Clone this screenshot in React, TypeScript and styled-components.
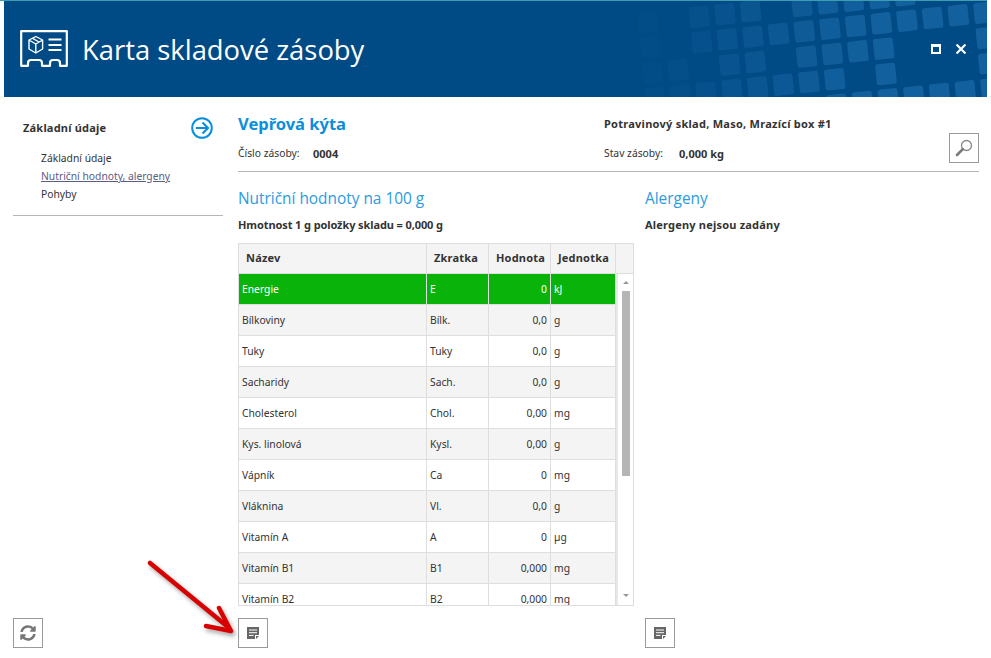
import React from 'react';
import styled, { createGlobalStyle } from 'styled-components';
import { FaSyncAlt } from 'react-icons/fa';

const GlobalStyle = createGlobalStyle`
  html, body {
    margin: 0;
    padding: 0;
    background: #fff;
  }
  body {
    font-family: "Noto Sans", "Liberation Sans", sans-serif;
    font-size: 10.3px;
    color: #333;
  }
  * {
    box-sizing: border-box;
  }
`;

const rows = [
  { name: 'Energie', short: 'E', value: '0', unit: 'kJ' },
  { name: 'Bílkoviny', short: 'Bílk.', value: '0,0', unit: 'g' },
  { name: 'Tuky', short: 'Tuky', value: '0,0', unit: 'g' },
  { name: 'Sacharidy', short: 'Sach.', value: '0,0', unit: 'g' },
  { name: 'Cholesterol', short: 'Chol.', value: '0,00', unit: 'mg' },
  { name: 'Kys. linolová', short: 'Kysl.', value: '0,00', unit: 'g' },
  { name: 'Vápník', short: 'Ca', value: '0', unit: 'mg' },
  { name: 'Vláknina', short: 'Vl.', value: '0,0', unit: 'g' },
  { name: 'Vitamín A', short: 'A', value: '0', unit: 'µg' },
  { name: 'Vitamín B1', short: 'B1', value: '0,000', unit: 'mg' },
  { name: 'Vitamín B2', short: 'B2', value: '0,000', unit: 'mg' },
];

// lattice of the header background squares: [column, row]
const tiles: [number, number][] = [
  [-2, 0], [0, 0], [1, 0], [2, 0], [4, 0], [5, 0], [6, 0], [7, 0], [8, 0],
  [-3, 1], [-2, 1], [0, 1], [1, 1], [2, 1], [3, 1], [4, 1], [5, 1], [6, 1], [7, 1], [8, 1], [9, 1], [10, 1], [11, 1],
  [-3, 2], [-2, 2], [-1, 2], [1, 2], [2, 2], [4, 2], [5, 2], [6, 2], [7, 2], [11, 2],
  [-2, 3], [-1, 3], [0, 3], [1, 3], [2, 3], [3, 3], [4, 3], [5, 3], [7, 3], [11, 3],
  [5, 4], [6, 4], [7, 4], [8, 4], [9, 4], [10, 4], [11, 4],
];

const HeaderTiles = () => (
  <TileLayer width="983" height="96" viewBox="4 1 983 96">
    {tiles.map(([i, j]) => {
      const x = 590 + (328 + 77 * i + 7 * j) / 3;
      const y = (50 - 8 * i + 76 * j) / 3;
      const opacity = Math.max(0.03, Math.min(1, (x - 620) / 240));
      return (
        <rect
          key={`${i}-${j}`}
          x={x - 10}
          y={y - 10.5}
          width={20}
          height={21}
          rx={2.5}
          fill="#2a7fbf"
          fillOpacity={opacity * 0.42}
          transform={`rotate(-6 ${x} ${y})`}
        />
      );
    })}
  </TileLayer>
);

const CardIcon = () => (
  <svg width="48" height="37" viewBox="0 0 48 37" fill="none" stroke="#fff" strokeWidth="2.2" strokeLinejoin="round">
    <path d="M1.2 1.2H46.8V35.8H40V33Q40 30 37 30H33Q30 30 30 33V35.8H22V33Q22 30 19 30H11Q8 30 8 33V35.8H1.2Z" />
    <path d="M15.8 6.5L22.6 10V19L15.8 23L9 19V10ZM9 10L15.8 14L22.6 10M15.8 14V23M12.2 8.2L19 12" strokeWidth="1.4" />
    <path d="M28.5 9.5H41.5M28.5 15H41.5M28.5 20H41.5" strokeWidth="1.8" />
  </svg>
);

const ArrowCircle = () => (
  <svg width="22" height="22" viewBox="0 0 22 22" fill="none" stroke="#0a8fdc" strokeWidth="2">
    <circle cx="11" cy="11" r="9.8" />
    <path d="M4.8 11H16.5M11.5 5.5L17 11L11.5 16.5" strokeWidth="2.2" />
  </svg>
);

const SearchIcon = () => (
  <svg width="18" height="18" viewBox="0 0 18 18" fill="none">
    <circle cx="11.5" cy="6.5" r="5" stroke="#8a8a8a" strokeWidth="1.3" />
    <path d="M7.8 10.2L2 16" stroke="#7a7a7a" strokeWidth="2.6" strokeLinecap="round" />
  </svg>
);

const NoteIcon = () => (
  <svg width="12" height="12" viewBox="0 0 12 12">
    <path d="M0 0H12V8H8V12H0Z" fill="#666" />
    <path d="M9 9H12L9 12Z" fill="#666" />
    <path d="M2 3H10M2 5.7H10M2 8.4H6.5" stroke="#fff" strokeWidth="1" />
  </svg>
);

const RedArrow = () => (
  <ArrowLayer width="100" height="90" viewBox="0 0 100 90" fill="none" stroke="#d80000" strokeWidth="4.5" strokeLinecap="round" strokeLinejoin="round">
    <path d="M10 12L88 76" />
    <path d="M79 57L91 80L66 75" />
  </ArrowLayer>
);

const App = () => {
  return (
    <Page>
      <GlobalStyle />
      <TopLine />
      <Header>
        <HeaderTiles />
        <CardIcon />
        <HeaderTitle>Karta skladové zásoby</HeaderTitle>
        <WindowButtons>
          <MaximizeIcon />
          <svg width="10" height="10" viewBox="0 0 10 10" stroke="#fff" strokeWidth="2.2">
            <path d="M0.5 0.5L9.5 9.5M9.5 0.5L0.5 9.5" />
          </svg>
        </WindowButtons>
      </Header>
      <Body>
        <Sidebar>
          <SideHead>
            <SideTitle>Základní údaje</SideTitle>
            <ArrowCircle />
          </SideHead>
          <SideList>
            <SideItem>Základní údaje</SideItem>
            <SideItem $active>Nutriční hodnoty, alergeny</SideItem>
            <SideItem>Pohyby</SideItem>
          </SideList>
          <SideDivider />
          <IconButton $pushed>
            <FaSyncAlt size={16} color="#777" />
          </IconButton>
        </Sidebar>
        <Main>
          <InfoHead>
            <InfoGrid>
              <ItemTitle>Vepřová kýta</ItemTitle>
              <LocationText>Potravinový sklad, Maso, Mrazící box #1</LocationText>
              <InfoPair>
                <InfoLabel>Číslo zásoby:</InfoLabel>
                <StrongText>0004</StrongText>
              </InfoPair>
              <InfoPair>
                <InfoLabel>Stav zásoby:</InfoLabel>
                <StrongText>0,000 kg</StrongText>
              </InfoPair>
            </InfoGrid>
            <SearchButton>
              <SearchIcon />
            </SearchButton>
          </InfoHead>
          <Columns>
            <NutritionColumn>
              <SectionTitle>Nutriční hodnoty na 100 g</SectionTitle>
              <SectionNote $tight>Hmotnost 1 g položky skladu = 0,000 g</SectionNote>
              <Table>
                <TableHead>
                  <HeadCell>Název</HeadCell>
                  <HeadCell>Zkratka</HeadCell>
                  <HeadCell>Hodnota</HeadCell>
                  <HeadCell>Jednotka</HeadCell>
                  <HeadCell />
                </TableHead>
                <TableBody>
                  <Rows>
                    {rows.map((row, index) => (
                      <Row key={row.name} $selected={index === 0} $odd={index % 2 === 1}>
                        <Cell>{row.name}</Cell>
                        <Cell>{row.short}</Cell>
                        <ValueCell>{row.value}</ValueCell>
                        <Cell>{row.unit}</Cell>
                      </Row>
                    ))}
                  </Rows>
                  <Scrollbar>
                    <ScrollUp />
                    <ScrollThumb />
                    <ScrollDown />
                  </Scrollbar>
                </TableBody>
              </Table>
              <IconButton>
                <NoteIcon />
              </IconButton>
            </NutritionColumn>
            <AllergenColumn>
              <SectionTitle>Alergeny</SectionTitle>
              <SectionNote>Alergeny nejsou zadány</SectionNote>
              <IconButton $pushed>
                <NoteIcon />
              </IconButton>
            </AllergenColumn>
          </Columns>
        </Main>
      </Body>
      <RedArrow />
    </Page>
  );
};

const Page = styled.div`
  position: relative;
  width: 991px;
  height: 658px;
  overflow: hidden;
  padding-right: 4px;
`;

const TopLine = styled.div`
  height: 1px;
  background-color: #3d9db3;
`;

const Header = styled.header`
  position: relative;
  height: 96px;
  margin-left: 4px;
  padding: 29px 0 0 16px;
  display: flex;
  align-items: flex-start;
  background-color: #004a85;
  color: #fff;
  overflow: hidden;

  > svg:not(:first-child) {
    position: relative;
  }
`;

const TileLayer = styled.svg`
  position: absolute;
  left: 0;
  top: 0;
`;

const HeaderTitle = styled.h1`
  position: relative;
  margin: -1px 0 0 14px;
  font-family: "Open Sans", sans-serif;
  font-size: 27.4px;
  line-height: 42px;
  font-weight: 400;
`;

const WindowButtons = styled.div`
  position: relative;
  margin: 14px 21px 0 auto;
  display: flex;
  align-items: center;
  gap: 15px;
`;

const MaximizeIcon = styled.span`
  display: block;
  width: 10px;
  height: 10px;
  border: 2px solid #fff;
  border-top-width: 3px;
`;

const Body = styled.div`
  height: 561px;
  margin-left: 4px;
  padding: 0 8px 10px 9px;
  display: flex;
`;

const Sidebar = styled.aside`
  width: 210px;
  flex-shrink: 0;
  display: flex;
  flex-direction: column;
  padding-top: 20px;
`;

const SideHead = styled.div`
  display: flex;
  align-items: center;
  justify-content: space-between;
  padding: 0 10px;
`;

const SideTitle = styled.div`
  padding-bottom: 2px;
  font-weight: 700;
  font-size: 11px;
  letter-spacing: 0.2px;
`;

const SideList = styled.ul`
  list-style: none;
  margin: 10px 0 0;
  padding: 0 0 0 28px;
`;

const SideItem = styled.li<{ $active?: boolean }>`
  height: 18px;
  line-height: 18px;
  color: ${(props) => (props.$active ? '#5c5c85' : '#333')};
  text-decoration: ${(props) => (props.$active ? 'underline' : 'none')};
`;

const SideDivider = styled.div`
  height: 1px;
  margin-top: 12px;
  background-color: #b5b5b5;
`;

const IconButton = styled.div<{ $pushed?: boolean }>`
  width: 30px;
  height: 30px;
  flex-shrink: 0;
  margin-top: ${(props) => (props.$pushed ? 'auto' : '12px')};
  display: flex;
  align-items: center;
  justify-content: center;
  border: 1px solid #9a9a9a;
  background-color: #fff;
`;

const Main = styled.main`
  flex: 1;
  margin-left: 15px;
  padding-top: 15px;
  display: flex;
  flex-direction: column;
`;

const InfoHead = styled.div`
  display: flex;
  height: 60px;
  border-bottom: 1px solid #b5b5b5;
`;

const InfoGrid = styled.div`
  flex: 1;
  display: grid;
  grid-template-columns: 366px 1fr;
  grid-template-rows: 23px 22px;
  row-gap: 7px;
  align-items: center;
`;

const ItemTitle = styled.div`
  font-size: 16.5px;
  font-weight: 700;
  color: #0a8fdc;
`;

const StrongText = styled.span`
  font-weight: 700;
  font-size: 11px;
`;

const LocationText = styled(StrongText)`
  letter-spacing: 0.26px;
`;

const InfoPair = styled.div`
  display: flex;
  align-items: center;
`;

const InfoLabel = styled.span`
  width: 75px;
`;

const SearchButton = styled.div`
  width: 30px;
  height: 30px;
  margin-top: 21px;
  display: flex;
  align-items: center;
  justify-content: center;
  border: 1px solid #9a9a9a;
`;

const Columns = styled.div`
  flex: 1;
  display: flex;
  gap: 11px;
  padding-top: 15px;
`;

const NutritionColumn = styled.section`
  width: 396px;
  display: flex;
  flex-direction: column;
`;

const AllergenColumn = styled.section`
  flex: 1;
  display: flex;
  flex-direction: column;
`;

const SectionTitle = styled.h2`
  margin: 0;
  height: 22px;
  line-height: 24px;
  font-family: "Open Sans", sans-serif;
  font-size: 15.4px;
  font-weight: 400;
  color: #2a9be0;
`;

const SectionNote = styled.div<{ $tight?: boolean }>`
  margin-top: 8px;
  height: 16px;
  line-height: 16px;
  font-weight: 700;
  font-size: 11px;
  letter-spacing: ${(props) => (props.$tight ? '-0.1px' : '0.2px')};
`;

const Table = styled.div`
  margin-top: 10px;
  height: 363px;
  display: flex;
  flex-direction: column;
  border: 1px solid #dedede;
  overflow: hidden;
`;

const columnTemplate = '188px 62px 62px 65px';

const TableHead = styled.div`
  height: 30px;
  flex-shrink: 0;
  display: grid;
  grid-template-columns: ${columnTemplate} 1fr;
  background-color: #f4f4f4;
  border-bottom: 1px solid #dedede;
`;

const HeadCell = styled.div`
  padding: 0 7px;
  line-height: 27px;
  font-weight: 700;
  font-size: 11px;
  letter-spacing: 0.2px;
  white-space: nowrap;
  border-right: 1px solid #dedede;

  &:last-child {
    border-right: 0;
  }
`;

const TableBody = styled.div`
  flex: 1;
  min-height: 0;
  display: flex;
`;

const Rows = styled.div`
  width: 377px;
  flex-shrink: 0;
  overflow: hidden;
`;

const Row = styled.div<{ $selected?: boolean; $odd?: boolean }>`
  height: 31px;
  display: grid;
  grid-template-columns: ${columnTemplate};
  color: ${(props) => (props.$selected ? '#fff' : '#333')};
  background-color: ${(props) => (props.$selected ? '#0ab30a' : props.$odd ? '#f4f4f4' : '#fff')};
  border-bottom: 1px solid #dedede;
`;

const Cell = styled.div`
  padding: 0 3px;
  line-height: 30px;
  border-right: 1px solid #dedede;
`;

const ValueCell = styled(Cell)`
  text-align: right;
`;

const Scrollbar = styled.div`
  flex: 1;
  display: flex;
  flex-direction: column;
  align-items: center;
  padding: 7px 0 8px;
  border-left: 2px solid #e8e8e8;
`;

const ScrollUp = styled.div`
  width: 0;
  height: 0;
  border-left: 3px solid transparent;
  border-right: 3px solid transparent;
  border-bottom: 3px solid #999;
`;

const ScrollThumb = styled.div`
  width: 8px;
  height: 185px;
  margin-top: 7px;
  background-color: #b5b5b5;
`;

const ScrollDown = styled.div`
  width: 0;
  height: 0;
  margin-top: auto;
  border-left: 3px solid transparent;
  border-right: 3px solid transparent;
  border-top: 3px solid #999;
`;

const ArrowLayer = styled.svg`
  position: absolute;
  left: 140px;
  top: 551px;
  filter: drop-shadow(2px 3px 2px rgba(0, 0, 0, 0.35));
`;

export default App;
